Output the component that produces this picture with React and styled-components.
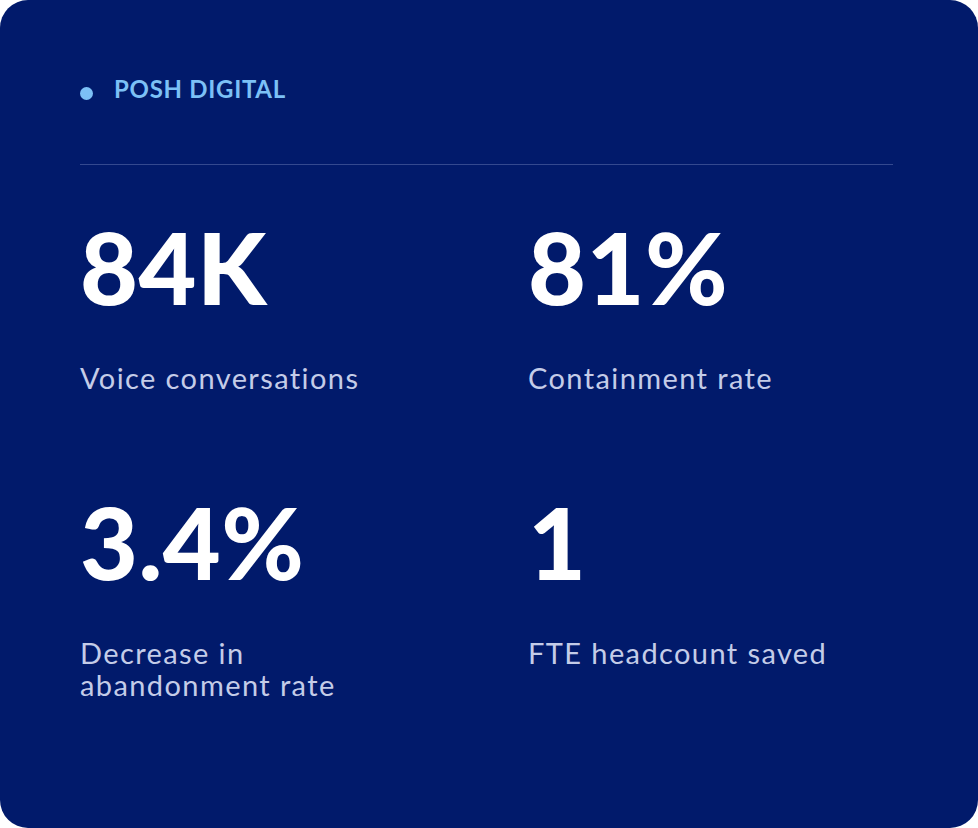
import React from "react";
import styled, { createGlobalStyle } from "styled-components";

const GlobalStyle = createGlobalStyle`
  html, body {
    margin: 0;
    padding: 0;
    background: #ffffff;
  }
  body {
    font-family: "Lato", "Liberation Sans", sans-serif;
    -webkit-font-smoothing: antialiased;
  }
`;

const stats = [
  { value: "84K", label: "Voice conversations" },
  { value: "81%", label: "Containment rate" },
  { value: "3.4%", label: "Decrease in\nabandonment rate" },
  { value: "1", label: "FTE headcount saved" },
];

const App = () => {
  return (
    <>
      <GlobalStyle />
      <Card>
        <Brand>
          <Dot />
          <BrandName>POSH DIGITAL</BrandName>
        </Brand>
        <Divider />
        <StatGrid>
          {stats.map((stat) => (
            <Stat key={stat.value}>
              <Value>{stat.value}</Value>
              <Label>{stat.label}</Label>
            </Stat>
          ))}
        </StatGrid>
      </Card>
    </>
  );
};

const Card = styled.section`
  box-sizing: border-box;
  width: 100%;
  min-height: 828px;
  background: #011a6b;
  border-radius: 28px;
  padding: 77px 85px 0 80px;
`;

const Brand = styled.div`
  display: flex;
  align-items: center;
  gap: 21px;
  height: 24px;
`;

const Dot = styled.span`
  width: 13px;
  height: 13px;
  border-radius: 50%;
  background: #7cc0f6;
  margin-top: 8px;
  flex-shrink: 0;
`;

const BrandName = styled.span`
  font-size: 24px;
  line-height: 24px;
  font-weight: 700;
  color: #7cc0f6;
  letter-spacing: 0.7px;
`;

const Divider = styled.hr`
  margin: 63px 0 0;
  border: none;
  height: 1px;
  background: #34498f;
`;

const StatGrid = styled.div`
  display: grid;
  grid-template-columns: 448px 1fr;
  row-gap: 97px;
  margin-top: 51px;
`;

const Stat = styled.div`
  display: flex;
  flex-direction: column;
  gap: 46px;
`;

const Value = styled.div`
  font-size: 100px;
  line-height: 100px;
  font-weight: 900;
  color: #ffffff;
  letter-spacing: 0.5px;
`;

const Label = styled.div`
  font-size: 29px;
  line-height: 32px;
  font-weight: 400;
  color: #c4cce8;
  letter-spacing: 1.4px;
  white-space: pre-line;
`;

export default App;
